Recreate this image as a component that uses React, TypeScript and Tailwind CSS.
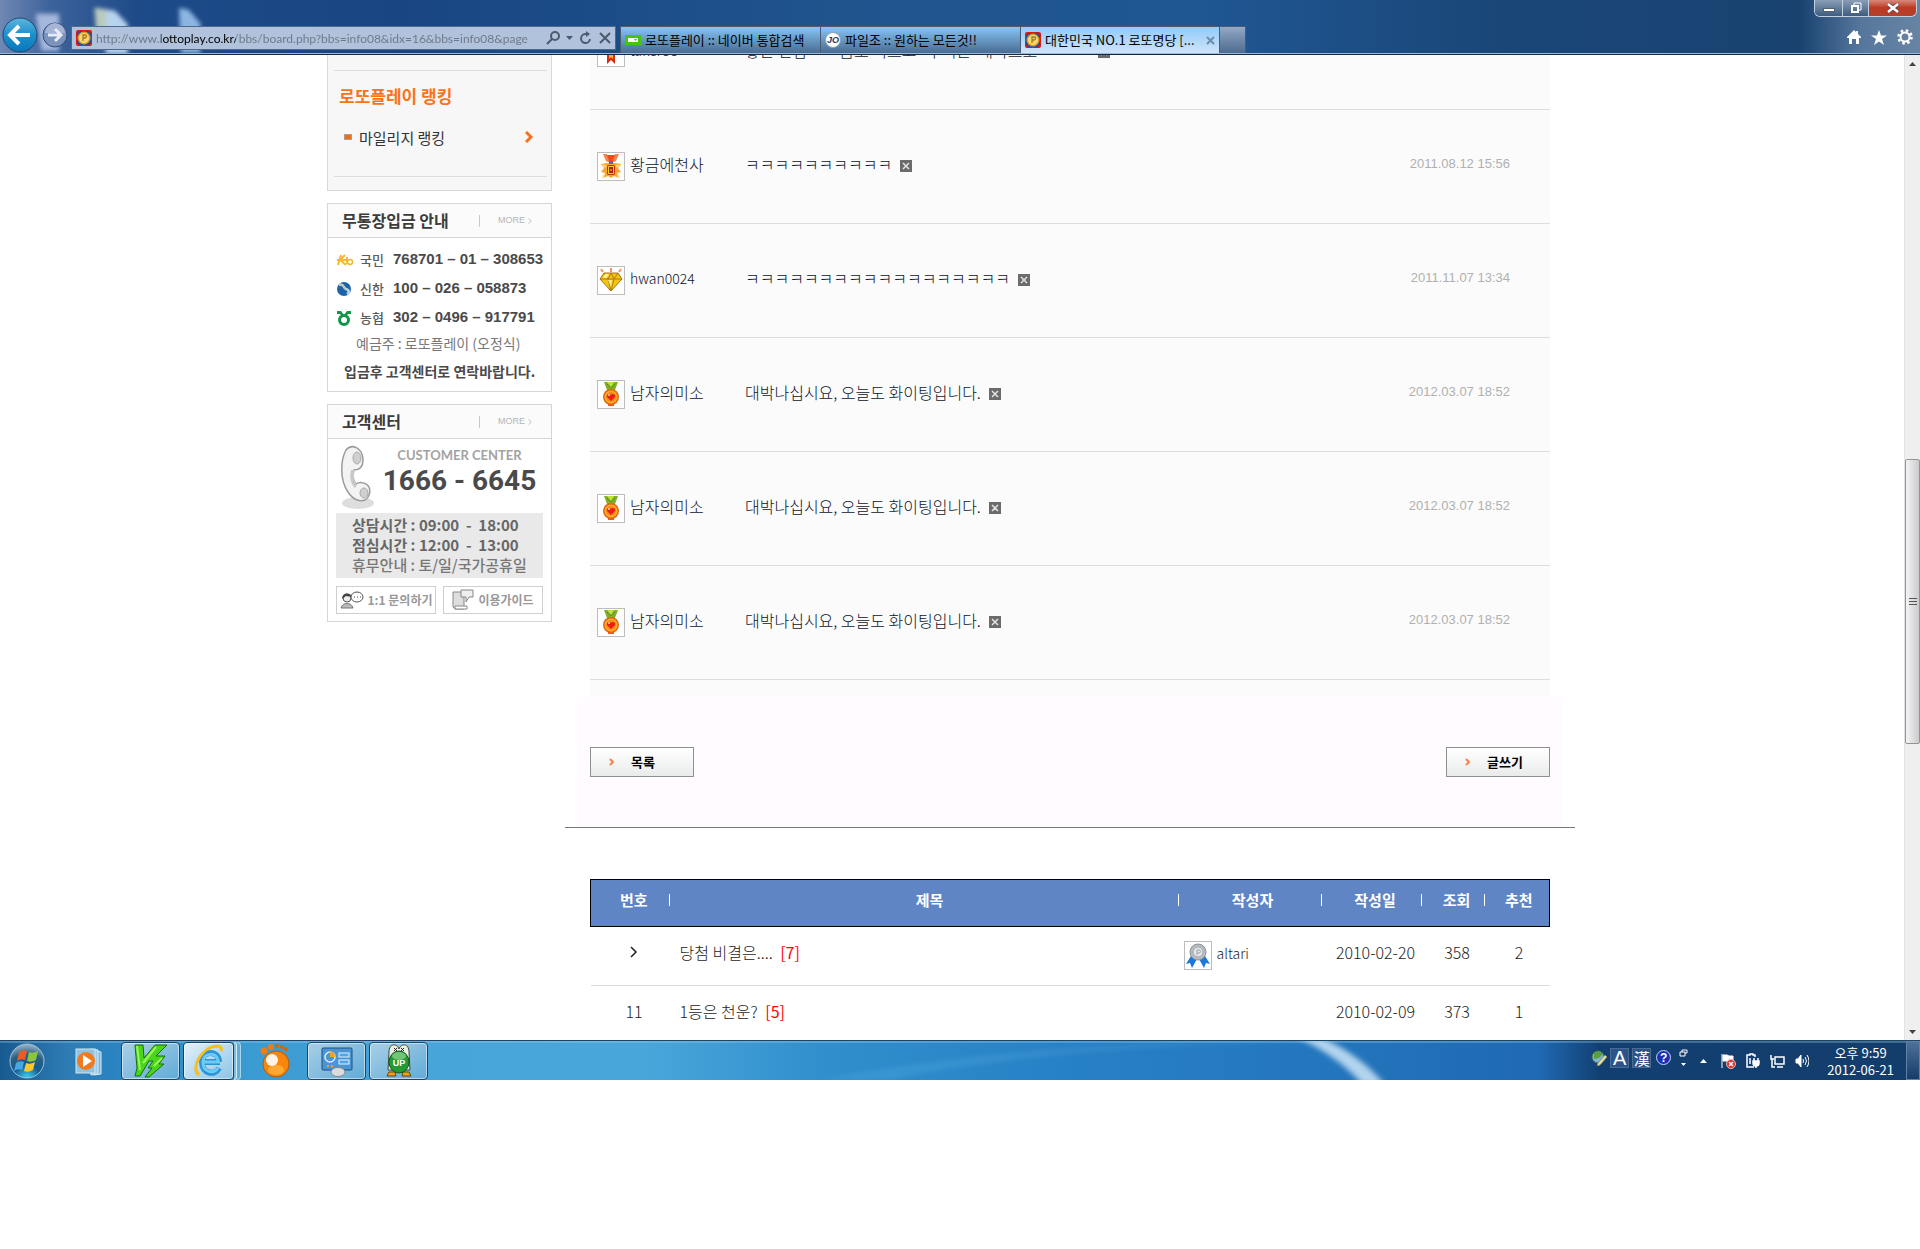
import React from 'react';
import { ChevronRight } from 'lucide-react';

type Rank = 'ribbon' | 'star' | 'diamond' | 'heart' | 'silver';

const comments: { rank: Rank; name: string; text: string; date: string }[] = [
  { rank: 'ribbon', name: 'takeroo', text: '좋은 만남         꿈도 이르고   구리은  대박으로               ', date: '2011.07.29 11:20' },
  { rank: 'star', name: '황금에천사', text: 'ㅋㅋㅋㅋㅋㅋㅋㅋㅋㅋ', date: '2011.08.12 15:56' },
  { rank: 'diamond', name: 'hwan0024', text: 'ㅋㅋㅋㅋㅋㅋㅋㅋㅋㅋㅋㅋㅋㅋㅋㅋㅋㅋ', date: '2011.11.07 13:34' },
  { rank: 'heart', name: '남자의미소', text: '대박나십시요, 오늘도 화이팅입니다.', date: '2012.03.07 18:52' },
  { rank: 'heart', name: '남자의미소', text: '대박나십시요, 오늘도 화이팅입니다.', date: '2012.03.07 18:52' },
  { rank: 'heart', name: '남자의미소', text: '대박나십시요, 오늘도 화이팅입니다.', date: '2012.03.07 18:52' },
];

const posts = [
  { no: '', title: '당첨 비결은....', count: 7, author: 'altari', date: '2010-02-20', views: 358, votes: 2 },
  { no: '11', title: '1등은 천운?', count: 5, author: '', date: '2010-02-09', views: 373, votes: 1 },
];

const columns = [
  { label: '번호', pad: 'pl-2' },
  { label: '제목', pad: 'pl-3' },
  { label: '작성자', pad: 'pl-1.5' },
  { label: '작성일', pad: 'pl-2' },
  { label: '조회', pad: 'pl-2' },
  { label: '추천', pad: 'pl-1' },
];

function RankIcon({ rank }: { rank: Rank }) {
  return (
    <span className="flex h-[29px] w-7 shrink-0 items-center justify-center border border-[#bdbdbd] bg-white">
      <svg viewBox="0 0 24 25" className="h-[25px] w-6" aria-hidden="true">
        {rank === 'ribbon' && (
          <>
            <circle cx="12" cy="8" r="6" fill="#f5a11c" />
            <path d="M8 12h8v12l-4-4-4 4z" fill="#d92810" />
            <path d="M10 13h4v6l-2-2-2 2z" fill="#ffb52b" />
          </>
        )}
        {rank === 'star' && (
          <>
            <path d="M4 0h4l2 5h4l2-5h4l-3 7-4 2h-2L7 7z" fill="#f0854e" />
            <path d="M8 1h8l-2 6h-4z" fill="#f9481b" />
            <path d="M2 10l6-1h8l6 1-3 4 3 4-4 1 2 5-5-2-3 2-3-2-5 2 2-5-4-1 3-4-3-4z" fill="#fba62c" />
            <path d="M5 21l-1 3M19 21l1 3M4 11l3 2M20 11l-3 2" stroke="#ffd98a" strokeWidth="2" />
            <rect x="10" y="7" width="4" height="3" fill="#4d6fa8" />
            <rect x="8" y="11" width="8" height="10" rx="2" fill="#c92a0b" />
            <rect x="9" y="12" width="6" height="8" rx="1" fill="#ffcf2a" />
            <rect x="10" y="13" width="4" height="6" fill="#a61c10" />
            <rect x="11" y="15" width="2" height="2" fill="#f3713c" />
          </>
        )}
        {rank === 'diamond' && (
          <>
            <path d="M5 5h14l4 6-11 12L1 11z" fill="#f2c418" stroke="#a97408" />
            <path d="M2 11h20M5 5l4 6 3-6 3 6 4-6M9 11l3 12 3-12" fill="none" stroke="#b57a08" />
            <path d="M6 6h4l-2 4H4zM9 12h4l-1 7z" fill="#fff08a" />
            <path d="M2 1l2 3M22 1l-2 3M12 0v4" stroke="#f0916c" strokeWidth="2" />
          </>
        )}
        {rank === 'heart' && (
          <>
            <path d="M5 0h14l-3 8H8z" fill="#7fb026" />
            <path d="M8 0h7l-3 5z" fill="#c2e43a" />
            <path d="M8 2l4 4 4-4" fill="none" stroke="#4d8424" strokeDasharray="2 1" />
            <circle cx="12" cy="15" r="8" fill="#e2641a" />
            <circle cx="12" cy="15" r="6.500" fill="#ffb01e" />
            <circle cx="12" cy="15" r="5" fill="#f58a1c" />
            <path d="M12 19l-4-4c-1-3 3-4 4-2 1-2 5-1 4 2z" fill="#ee1c16" />
            <circle cx="10" cy="13" r="1" fill="#ffd2c4" />
            <path d="M9 22h6v2H9z" fill="#f05b1d" />
          </>
        )}
        {rank === 'silver' && (
          <>
            <path d="M5 13L0 21l4-1 2 5 5-9zM19 13l5 8-4-1-2 5-5-9z" fill="#1f78d8" />
            <circle cx="12" cy="9" r="8" fill="#b9bcc0" stroke="#8d9196" />
            <circle cx="12" cy="9" r="5" fill="#e4e6e8" stroke="#a5a8ac" />
            <path d="M11 12V7h2a1 1 0 010 3h-2" fill="none" stroke="#a0a3a8" />
          </>
        )}
      </svg>
    </span>
  );
}

function CoinIcon() {
  return (
    <svg viewBox="0 0 16 16" className="h-4 w-4 shrink-0" aria-hidden="true">
      <rect width="16" height="16" rx="2" fill="#d8181c" />
      <path d="M1 4l3-3h8l3 3v8l-3 3H4l-3-3z" fill="#1b4f94" />
      <circle cx="8" cy="8" r="6.500" fill="#d9a02c" />
      <circle cx="8" cy="8" r="5" fill="#f8da72" />
      <path d="M7 11V5h2a1.500 1.500 0 010 3H7" fill="none" stroke="#a8741a" strokeWidth="1.300" />
    </svg>
  );
}

function BrowserBar() {
  return (
    <header className="relative flex h-[55px] shrink-0 items-end overflow-hidden border-b border-[#14294a] bg-[linear-gradient(90deg,#6f88b4_0,#3d639b_50px,#1d4a88_140px,#194683_400px,#20568f_900px,#1f5794_1200px,#1a4677_1500px,#194270_1800px,#55779c_1860px,#6884a3_100%)]">
      <svg className="absolute inset-0 h-full w-60" viewBox="0 0 240 55" aria-hidden="true">
        <defs>
          <filter id="soft" x="-50%" y="-50%" width="200%" height="200%">
            <feGaussianBlur stdDeviation="2" />
          </filter>
        </defs>
        <g filter="url(#soft)">
          <path d="M34 14h24v38H40z" fill="#a5b7dc" />
          <path d="M95 8l20 3 13 14v30h-22z" fill="#b7d3ee" />
          <path d="M94 8l12 2v36l-9 3z" fill="#b9cbbd" />
          <path d="M180 8l10 2 12 14v30h-20z" fill="#8db5e2" />
        </g>
      </svg>

      <div className="relative flex min-w-0 flex-1 items-end border-b border-[#9db9d8]">
        <div className="flex h-9 shrink-0 items-center gap-1 pl-0.5">
          <button type="button" aria-label="뒤로" className="h-9 w-9">
            <svg viewBox="0 0 36 36" className="h-9 w-9">
              <defs>
                <linearGradient id="back" x1="0" y1="0" x2="0" y2="1">
                  <stop offset="0" stopColor="#5db5de" />
                  <stop offset=".5" stopColor="#1c8fcb" />
                  <stop offset="1" stopColor="#0a76b8" />
                </linearGradient>
              </defs>
              <circle cx="18" cy="18" r="17" fill="url(#back)" stroke="#26456f" />
              <path d="M8 18h20M17 9l-9 9 9 9" fill="none" stroke="#fff" strokeWidth="4" />
            </svg>
          </button>
          <button type="button" aria-label="앞으로" className="h-[26px] w-[26px]">
            <svg viewBox="0 0 26 26" className="h-[26px] w-[26px]">
              <circle cx="13" cy="13" r="12" fill="#7a93bb" stroke="#2f4a76" />
              <path d="M3 11a10 10 0 0120 0z" fill="#a4b4d2" />
              <path d="M6 13h13M13 7l6 6-6 6" fill="none" stroke="#e6ecf5" strokeWidth="3" />
            </svg>
          </button>
        </div>

        <div className="mb-[3px] ml-[3px] flex h-6 w-[545px] shrink-0 items-center gap-1 border border-[#50688a] bg-[#b0c2dc] px-1 text-[#4c5a6d]">
          <CoinIcon />
          <input
            aria-label="주소"
            defaultValue="http://www.lottoplay.co.kr/bbs/board.php?bbs=info08&idx=16&bbs=info08&page"
            className="h-5 min-w-0 flex-1 bg-[linear-gradient(90deg,#6c7888_65px,#000_65px,#000_140px,#6c7888_140px)] bg-clip-text font-['Lato',sans-serif] text-xs text-transparent outline-none"
          />
          <div className="flex items-center gap-1.5">
            <button type="button" aria-label="검색">
              <svg viewBox="0 0 14 14" className="h-3.5 w-3.5" fill="none" stroke="currentColor" strokeWidth="2">
                <circle cx="9" cy="5" r="4" />
                <path d="M6 8l-5 5" />
              </svg>
            </button>
            <button type="button" aria-label="주소 목록">
              <svg viewBox="0 0 7 4" className="h-1 w-[7px]" fill="currentColor">
                <path d="M0 0h7L3.500 4z" />
              </svg>
            </button>
            <button type="button" aria-label="새로 고침">
              <svg viewBox="0 0 14 14" className="h-3.5 w-3.5" fill="none" stroke="currentColor" strokeWidth="2">
                <path d="M11 8a4.500 4.500 0 11-4-5h3" />
                <path d="M7 0l4 3-4 3z" fill="currentColor" stroke="none" />
              </svg>
            </button>
            <button type="button" aria-label="중지">
              <svg viewBox="0 0 12 12" className="h-3 w-3" stroke="currentColor" strokeWidth="2">
                <path d="M1 1l10 10M11 1L1 11" />
              </svg>
            </button>
          </div>
        </div>

        <nav className="ml-1 flex h-[27px] text-[13px] leading-5 text-black">
          <a href="#naver" className="flex w-[200px] items-center gap-1 border-l border-t border-[#4c5b70] bg-linear-to-b from-[#86c6f8] to-[#4a6c92] pl-1">
            <svg viewBox="0 0 16 10" className="h-2.5 w-4 shrink-0">
              <rect width="16" height="10" fill="#49c30d" />
              <rect x="3" y="3" width="10" height="4" fill="#fff" />
              <path d="M9 4h3l-1.500 2z" fill="#49c30d" />
            </svg>
            <span className="whitespace-nowrap">로또플레이 :: 네이버 통합검색</span>
          </a>
          <a href="#filejo" className="flex w-[200px] items-center gap-1 border-l border-t border-[#4c5b70] bg-linear-to-b from-[#86c6f8] to-[#4a6c92] pl-1">
            <span className="flex h-4 w-4 shrink-0 items-center justify-center rounded-full border border-[#8fa0b4] bg-white font-['Liberation_Sans',sans-serif] text-[9px] font-bold italic text-[#1f3763]">
              JO
            </span>
            <span className="whitespace-nowrap">파일조 :: 원하는 모든것!!</span>
          </a>
          <div className="flex w-[199px] items-center border-l border-t border-[#4c5b70] bg-linear-to-b from-[#8fcbfa] to-[#cfe3f7] px-1">
            <a href="#lotto" className="flex flex-1 items-center gap-1">
              <CoinIcon />
              <span className="whitespace-nowrap">대한민국 NO.1 로또명당 [...</span>
            </a>
            <button type="button" aria-label="탭 닫기">
              <svg viewBox="0 0 9 9" className="h-[9px] w-[9px]" stroke="#6f8cae" strokeWidth="2">
                <path d="M1 1l7 7M8 1L1 8" />
              </svg>
            </button>
          </div>
          <button type="button" aria-label="새 탭" className="w-[27px] border-x border-t border-[#4c5b70] bg-linear-to-b from-[#93a9c6] to-[#4e6b90]" />
        </nav>

        <div className="ml-auto flex h-[54px] flex-col items-end justify-between pb-2 pr-[3px]">
          <div className="flex h-[18px] overflow-hidden rounded-b-md border border-t-0 border-[#c3d0de]">
            <button type="button" aria-label="최소화" className="flex w-7 items-center justify-center border-r border-[#c3d0de] bg-linear-to-b from-[#8fa3ba] to-[#3f5c80] pt-1">
              <span className="h-1 w-3 border border-[#51616f] bg-white" />
            </button>
            <button type="button" aria-label="이전 크기로" className="flex w-[26px] items-center justify-center border-r border-[#c3d0de] bg-linear-to-b from-[#8fa3ba] to-[#3f5c80]">
              <svg viewBox="0 0 12 12" className="h-3 w-3" fill="none" stroke="#fff" strokeWidth="2">
                <path d="M4 3V1h7v7H9" strokeWidth="1" />
                <rect x="2" y="4" width="6" height="6" />
              </svg>
            </button>
            <button type="button" aria-label="닫기" className="flex w-[47px] items-center justify-center bg-linear-to-b from-[#d99286] via-[#bd3a23] to-[#b5402c]">
              <svg viewBox="0 0 12 10" className="h-2.5 w-3">
                <path d="M1 1l10 8M11 1L1 9" stroke="#5a4a52" strokeWidth="4" />
                <path d="M1 1l10 8M11 1L1 9" stroke="#fff" strokeWidth="2.500" />
              </svg>
            </button>
          </div>
          <div className="flex gap-2.5 pr-1 text-white">
            <button type="button" aria-label="홈">
              <svg viewBox="0 0 14 14" className="h-3.5 w-3.5" fill="currentColor">
                <path d="M7 0l2 2V1h2v3l3 3v1h-2v6H9V9H5v5H2V8H0V7z" />
              </svg>
            </button>
            <button type="button" aria-label="즐겨찾기">
              <svg viewBox="0 0 16 15" className="h-[15px] w-4" fill="currentColor">
                <path d="M8 0l2 5.500h6l-5 3.500 2 6-5-3.500L3 15l2-6-5-3.500h6z" />
              </svg>
            </button>
            <button type="button" aria-label="도구">
              <svg viewBox="0 0 16 16" className="h-4 w-4" fill="none" stroke="currentColor">
                <circle cx="8" cy="8" r="4.500" strokeWidth="2" />
                <circle cx="8" cy="8" r="6.500" strokeWidth="2.500" strokeDasharray="2.500 2.600" />
              </svg>
            </button>
          </div>
        </div>
      </div>
    </header>
  );
}

function SideHead({ title }: { title: string }) {
  return (
    <div className="flex h-[34px] items-center border-b border-[#d6d6d6] bg-[#fbfbfb] pl-3.5 pr-4">
      <h2 className="flex-1 pb-0.5 text-base font-bold text-[#3c3c3c]">{title}</h2>
      <span className="mr-[18px] h-3 w-px bg-[#c9c9c9]" />
      <a href="#more" className="flex items-center font-['Liberation_Sans',sans-serif] text-[9px] text-[#b5b5b5]">
        MORE
        <ChevronRight className="h-2.5 w-2.5" />
      </a>
    </div>
  );
}

function BankRow({ bank, account, children }: { bank: string; account: string; children: React.ReactNode }) {
  return (
    <li className="flex h-[29px] items-center whitespace-nowrap">
      <svg viewBox="0 0 18 16" className="mr-1.5 h-4 w-[18px] shrink-0" aria-hidden="true">
        {children}
      </svg>
      <span className="w-[33px] text-[13px] font-medium text-[#5c5c5c]">{bank}</span>
      <span className="font-['Liberation_Sans',sans-serif] text-[15px] font-bold text-[#4a4a4a]">{account}</span>
    </li>
  );
}

function Sidebar() {
  return (
    <aside className="w-[225px] shrink-0">
      <section className="mb-3 border border-t-0 border-[#d9d9d9] bg-[#f7f7f7] pb-[13px] pl-1.5 pr-1 pt-[15px]">
        <div className="border-y border-[#dedede] pb-[26px] pl-[5px] pr-3.5 pt-[13px]">
          <h2 className="mb-[18px] text-[17px] font-bold leading-6 text-[#fb7318]">로또플레이 랭킹</h2>
          <a href="#mileage" className="flex h-6 items-center text-[15px] text-[#333]">
            <span className="mb-0.5 ml-[5px] mr-[7px] h-1.5 w-2 border border-[#b79a86] bg-[#e8701c]" />
            <span className="flex-1">마일리지 랭킹</span>
            <svg viewBox="0 0 8 12" className="mb-0.5 h-3 w-2" fill="none" stroke="#fb6f1a" strokeWidth="3">
              <path d="M1 1l5 5-5 5" />
            </svg>
          </a>
        </div>
      </section>

      <section className="mb-3 h-[189px] border border-[#d6d6d6] bg-white">
        <SideHead title="무통장입금 안내" />
        <ul className="pl-2 pt-[7px]">
          <BankRow bank="국민" account="768701 – 01 – 308653">
            <path d="M1 8h9M5 3l-3 10M9 3L4 8l6 5" fill="none" stroke="#f7b733" strokeWidth="2" />
            <path d="M11 5v7" stroke="#f7b733" strokeWidth="2" />
            <circle cx="14" cy="10" r="2.500" fill="none" stroke="#f7b733" strokeWidth="1.500" />
          </BankRow>
          <BankRow bank="신한" account="100 – 026 – 058873">
            <circle cx="8" cy="8" r="7" fill="#1d63a8" />
            <path d="M3 4c5-2 4 3 7 4s4 3 1 5" fill="none" stroke="#b9d8ee" strokeWidth="2.500" />
            <path d="M4 4c5 0 3 3 6 5" fill="none" stroke="#d3b666" />
          </BankRow>
          <BankRow bank="농협" account="302 – 0496 – 917791">
            <circle cx="8" cy="10" r="4.500" fill="none" stroke="#119548" strokeWidth="3" />
            <path d="M1 1h4l3 4 3-4h4v3h-3L9 7H7L4 4H1z" fill="#119548" />
          </BankRow>
        </ul>
        <p className="whitespace-nowrap pl-7 text-sm leading-[22px] text-[#777]">예금주 : 로또플레이 (오정식)</p>
        <p className="mt-1.5 whitespace-nowrap pl-4 text-sm font-bold leading-[22px] text-[#4a4a4a]">입금후 고객센터로 연락바랍니다.</p>
      </section>

      <section className="border border-[#d6d6d6] bg-white pb-[7px]">
        <SideHead title="고객센터" />
        <div className="flex h-[74px] pl-3 pt-1.5">
          <svg viewBox="0 0 36 66" className="h-[66px] w-9 shrink-0" aria-hidden="true">
            <ellipse cx="18" cy="58" rx="16" ry="6" fill="#dedede" />
            <path d="M6 5C1 14-1 34 8 47c5 8 12 10 17 8 4-2 6-8 4-13-2-4-9-6-13-3-3-4-4-9-2-14 6 0 9-4 9-10C23 3 12-2 6 5z" fill="#f3f3f3" stroke="#9b9b9b" strokeWidth="1.500" />
            <path d="M11 25c-2 8 0 14 4 18l2-3c-3-4-4-9-2-15z" fill="#c9c9c9" />
            <ellipse cx="17" cy="13" rx="4" ry="6" fill="#cfcfcf" stroke="#aaa" />
            <ellipse cx="24" cy="48" rx="4" ry="5" fill="#cfcfcf" stroke="#aaa" />
          </svg>
          <div className="flex flex-1 flex-col items-center whitespace-nowrap pr-2 pt-0.5">
            <span className="font-['Lato',sans-serif] text-[13px] font-bold leading-4 text-[#a3a3a3]">CUSTOMER CENTER</span>
            <strong className="font-['Roboto',sans-serif] text-[28px] leading-9 text-[#4a4a4a]">1666 - 6645</strong>
          </div>
        </div>
        <div className="mx-2 flex h-[65px] flex-col justify-center whitespace-pre bg-[#e9e9e9] pb-0.5 pl-4 text-[15px] font-bold leading-5 text-[#666]">
          <p>상담시간 : 09:00  -  18:00</p>
          <p>점심시간 : 12:00  -  13:00</p>
          <p className="font-medium text-[#777]">휴무안내 : 토/일/국가공휴일</p>
        </div>
        <div className="mx-2 mt-2 flex gap-[7px] text-xs font-bold text-[#999]">
          <button type="button" className="flex h-7 flex-1 items-center justify-center gap-1 whitespace-nowrap border border-[#cfcfcf] bg-white">
            <svg viewBox="0 0 24 20" className="h-5 w-6 shrink-0" aria-hidden="true">
              <circle cx="7" cy="8" r="4" fill="#eee" stroke="#555" />
              <path d="M2 9c0-7 9-7 10-2L6 6z" fill="#444" />
              <path d="M1 18c1-6 11-6 12 0z" fill="#bbb" stroke="#777" />
              <ellipse cx="17" cy="7" rx="6" ry="5" fill="#fff" stroke="#555" />
              <path d="M14 7h1M17 7h1M20 7h1" stroke="#555" />
            </svg>
            1:1 문의하기
          </button>
          <button type="button" className="flex h-7 flex-1 items-center justify-center gap-1 whitespace-nowrap border border-[#cfcfcf] bg-white">
            <svg viewBox="0 0 22 22" className="h-[22px] w-[22px] shrink-0" aria-hidden="true">
              <path d="M1 3h11v17H3l-2-2z" fill="#ddd" stroke="#888" />
              <path d="M3 17h12v3H3z" fill="#fff" stroke="#888" />
              <path d="M9 1h12v7h-4l-3 5V8H9z" fill="#eee" stroke="#888" />
            </svg>
            이용가이드
          </button>
        </div>
      </section>
    </aside>
  );
}

function ActionButton({ label }: { label: string }) {
  return (
    <button type="button" className="flex h-[30px] w-[104px] items-center border border-[#8d9090] bg-linear-to-b from-white to-[#e9ebea] pl-[18px] text-[13px] font-bold text-black">
      <svg viewBox="0 0 6 8" className="mr-4 h-2 w-1.5" fill="none" stroke="#f5824b" strokeWidth="2">
        <path d="M1 1l3 3-3 3" />
      </svg>
      {label}
    </button>
  );
}

function Board() {
  return (
    <main className="-mt-[59px] min-w-0 flex-1">
      <div className="mx-[25px] bg-[#fbfbfb] pb-[17px]">
        {comments.map((comment, index) => (
          <article key={index} className="flex h-[114px] items-center border-b border-[#dcdcdc] pl-[7px] pr-10">
            <RankIcon rank={comment.rank} />
            <span className={`w-[120px] pb-1.5 pl-[5px] font-light text-[#0c1428] ${/^[a-z]/.test(comment.name) ? 'text-sm' : 'text-base'}`}>
              {comment.name}
            </span>
            <p className="flex flex-1 items-center whitespace-pre pb-1.5 text-base font-light text-[#0c1428]">
              {comment.text}
              <button type="button" aria-label="댓글 삭제" className="ml-2 mt-1 flex h-3 w-3 items-center justify-center bg-[#6b6b6b]">
                <svg viewBox="0 0 8 8" className="h-2 w-2" stroke="#e4e4e4" strokeWidth="1.500">
                  <path d="M1 1l6 6M7 1L1 7" />
                </svg>
              </button>
            </p>
            <time className="pb-1.5 font-['Liberation_Sans',sans-serif] text-[13px] text-[#b0b0b0]">{comment.date}</time>
          </article>
        ))}
      </div>

      <div className="mx-3 flex justify-between bg-[#fffbff] px-[13px] py-[50px]">
        <ActionButton label="목록" />
        <ActionButton label="글쓰기" />
      </div>
      <hr className="border-[#777]" />

      <div className="mx-[25px] mt-[51px]">
        <table className="w-full table-fixed border-collapse text-base text-[#1c1c1c]">
          <colgroup>
            <col className="w-[79px]" />
            <col />
            <col className="w-[143px]" />
            <col className="w-[100px]" />
            <col className="w-[63px]" />
            <col className="w-[65px]" />
          </colgroup>
          <thead>
            <tr className="h-[47px] border border-black bg-[#5f85c4] text-white">
              {columns.map(({ label, pad }, index) => (
                <th key={label} className="p-0 pb-1.5 text-[15px] font-bold">
                  <span className="flex items-center">
                    <span className={`flex-1 ${pad}`}>{label}</span>
                    {index < columns.length - 1 && <span className="h-3 w-px bg-white" />}
                  </span>
                </th>
              ))}
            </tr>
          </thead>
          <tbody>
            {posts.map((post) => (
              <tr key={post.title} className="h-[59px] border-b border-[#dcdcdc] text-center font-light">
                <td className="p-0 pb-2 pl-2">
                  {post.no || (
                    <svg viewBox="0 0 8 12" className="mx-auto h-3 w-2" fill="none" stroke="#222" strokeWidth="1.500">
                      <path d="M1 1l5 5-5 5" />
                    </svg>
                  )}
                </td>
                <td className="p-0 pb-2 pl-2.5 text-left">
                  <a href="#post">
                    {post.title} <span className="ml-1 font-normal text-[#f00]">[{post.count}]</span>
                  </a>
                </td>
                <td className="p-0 pb-0.5 pl-[5px]">
                  {post.author && (
                    <span className="flex items-center gap-[5px]">
                      <RankIcon rank="silver" />
                      <span className="pb-1 text-sm">{post.author}</span>
                    </span>
                  )}
                </td>
                <td className="whitespace-nowrap p-0 pb-2 pl-2">{post.date}</td>
                <td className="p-0 pb-2 pl-2">{post.views}</td>
                <td className="p-0 pb-2 pl-1">{post.votes}</td>
              </tr>
            ))}
          </tbody>
        </table>
      </div>
    </main>
  );
}

function ScrollBar() {
  return (
    <div className="flex w-4 shrink-0 flex-col border-l border-[#e2e2e2] bg-[#efefef]">
      <button type="button" aria-label="위로" className="flex h-[17px] items-center justify-center">
        <svg viewBox="0 0 7 4" className="h-1 w-[7px]" fill="#444">
          <path d="M0 4h7L3.500 0z" />
        </svg>
      </button>
      <div className="grow-[388] basis-0" />
      <div className="flex grow-[283] basis-0 flex-col items-center justify-center gap-0.5 rounded-xs border border-[#949494] bg-linear-to-r from-[#f5f5f5] to-[#cbcbcf]">
        <span className="h-px w-2 bg-[#555]" />
        <span className="h-px w-2 bg-[#555]" />
        <span className="h-px w-2 bg-[#555]" />
      </div>
      <div className="grow-[280] basis-0" />
      <button type="button" aria-label="아래로" className="flex h-[17px] items-center justify-center">
        <svg viewBox="0 0 7 4" className="h-1 w-[7px]" fill="#444">
          <path d="M0 0h7L3.500 4z" />
        </svg>
      </button>
    </div>
  );
}

function TaskButton({ label, active, children }: { label: string; active?: boolean; children: React.ReactNode }) {
  return (
    <button
      type="button"
      aria-label={label}
      className={`flex h-[38px] items-center justify-center rounded-sm border ring-1 ring-inset ring-white/50 ${
        active
          ? 'w-[51px] border-[#1c3f60] bg-linear-to-br from-[#e3f1fa] to-[#8cc4e6]'
          : 'w-[59px] border-[#1c4468] bg-linear-to-br from-[#a8cfe6] to-[#5fabd8]'
      }`}
    >
      {children}
    </button>
  );
}

function TaskBar() {
  return (
    <footer className="relative flex h-10 shrink-0 items-center overflow-hidden border-t border-[#1f4565] bg-[linear-gradient(90deg,#175a90_0,#2f7db5_70px,#2a83c0_110px,#3a9bd2_250px,#48a5d9_430px,#4aa6da_640px,#318fcd_820px,#2780c5_1080px,#2477be_1300px,#1f69b2_1540px,#123f72_1600px,#133d6b_100%)]">
      <svg viewBox="0 0 1920 40" preserveAspectRatio="none" className="absolute inset-0 h-full w-full" aria-hidden="true">
        <defs>
          <filter id="glow" x="-20%" y="-20%" width="140%" height="140%">
            <feGaussianBlur stdDeviation="3" />
          </filter>
        </defs>
        <path d="M1296-4h24q40 18 64 48h-22q-26-30-66-48z" fill="#d6ecfb" opacity=".8" filter="url(#glow)" />
        <path d="M820 40q200-40 480-40h30q-290 5-440 40z" fill="#5fb0e4" opacity=".25" filter="url(#glow)" />
        <path d="M0 1h1920" stroke="#9ccbe8" opacity=".7" />
      </svg>

      <div className="relative flex h-full items-center">
        <button type="button" aria-label="시작" className="ml-[9px] h-9 w-9">
          <svg viewBox="0 0 36 36" className="h-9 w-9">
            <defs>
              <radialGradient id="orb" cx=".5" cy="1" r="1">
                <stop offset="0" stopColor="#3fd6f7" />
                <stop offset=".4" stopColor="#125b8e" />
                <stop offset=".7" stopColor="#2a5f86" />
                <stop offset="1" stopColor="#9db9ca" />
              </radialGradient>
            </defs>
            <circle cx="18" cy="18" r="17" fill="url(#orb)" stroke="#9dc2da" />
            <path d="M10 9q4-3 8-1l-2 9q-4-2-8 1z" fill="#ee5a24" />
            <path d="M20 9q4 2 9-1l-2 9q-5 3-9 1z" fill="#8cc63f" />
            <path d="M7 20q4-3 8-1l-2 8q-4-2-8 1z" fill="#4aa4e8" />
            <path d="M17 20q4 2 9-1l-2 8q-5 3-9 1z" fill="#fbc92c" />
          </svg>
        </button>
        <button type="button" aria-label="미디어 플레이어" className="ml-[30px] h-8 w-[30px]">
          <svg viewBox="0 0 30 32" className="h-8 w-[30px]">
            <path d="M19 5l7 2v22l-7 1z" fill="#7fb7dc" stroke="#d6ebf7" />
            <path d="M16 4l7 1v24l-7 1z" fill="#9ccbe8" stroke="#d6ebf7" />
            <rect x="1" y="4" width="19" height="24" fill="#8fc3e4" stroke="#cfe6f4" />
            <circle cx="11" cy="16" r="9" fill="#f07b1e" />
            <path d="M8 10l9 6-9 6z" fill="#fff" />
          </svg>
        </button>
        <div className="ml-4 flex items-center gap-[3px]">
          <TaskButton label="V3">
            <svg viewBox="0 0 34 36" className="h-9 w-[34px]">
              <path d="M1 2h8l1 13L21 2h12L22 13h9l-6 8h5L15 34h-4l7-9h-4l5-7h-4L6 33H1l2-8z" fill="#48d51a" stroke="#176d0c" />
              <path d="M3 3l3 24M22 4L9 20M28 15l-8 8" stroke="#9cf35e" strokeWidth="2" />
            </svg>
          </TaskButton>
          <div className="flex">
            <TaskButton label="인터넷 익스플로러" active>
              <svg viewBox="0 0 32 36" className="h-9 w-8">
                <path d="M27 19H9M26 25c-4 8-17 6-17-6C9 7 26 7 26 19" fill="none" stroke="#2d95d6" strokeWidth="6" />
                <path d="M27 19H9M25 25c-4 6-15 5-15-6C10 9 25 9 25 18" fill="none" stroke="#6ecbf5" strokeWidth="3" />
                <path d="M6 32C-3 26 8 4 24 3c4 0 5 2 4 5" fill="none" stroke="#f8bd20" strokeWidth="3" />
              </svg>
            </TaskButton>
            <span className="w-[3px] rounded-r-sm border-y border-r border-[#d8edf8] bg-[#7dbde3]" />
            <span className="w-1 rounded-r-sm border-y border-r border-[#a8d4ec] bg-[#5fadd9]" />
          </div>
          <button type="button" aria-label="곰플레이어" className="mx-3.5 h-9 w-8">
            <svg viewBox="0 0 32 36" className="h-9 w-8">
              <circle cx="18" cy="21" r="13" fill="#f8860c" stroke="#b85a08" />
              <ellipse cx="18" cy="27" rx="8" ry="5" fill="#ffc04c" opacity=".6" />
              <circle cx="14" cy="17" r="6" fill="#fff" opacity=".9" />
              <circle cx="6" cy="8" r="3.500" fill="#f07c14" />
              <circle cx="13" cy="4" r="3" fill="#f07c14" />
              <circle cx="19" cy="3" r="2" fill="#d8620c" />
              <circle cx="24" cy="4" r="2" fill="#d8620c" />
              <circle cx="28" cy="6" r="2" fill="#d8620c" />
            </svg>
          </button>
          <TaskButton label="제어판">
            <svg viewBox="0 0 32 32" className="h-8 w-8">
              <rect x="1" y="3" width="30" height="22" rx="1" fill="#4a95d2" stroke="#1b4f86" />
              <circle cx="9" cy="12" r="5" fill="none" stroke="#d8ecf8" strokeWidth="1.500" />
              <path d="M9 6a6 6 0 015 6H9z" fill="#f5a02a" />
              <rect x="18" y="8" width="10" height="4" fill="#4ea6e8" stroke="#e3f2fb" />
              <rect x="18" y="15" width="10" height="4" fill="#4ea6e8" stroke="#e3f2fb" />
              <path d="M6 21h2M10 21h2" stroke="#f5a02a" strokeWidth="2" />
              <ellipse cx="17" cy="27" rx="7" ry="4.500" fill="#d9dcde" stroke="#888" />
            </svg>
          </TaskButton>
          <TaskButton label="업로더">
            <svg viewBox="0 0 28 36" className="h-9 w-7">
              <path d="M4 29l-2 4h9l-1-4zM24 29l2 4h-9l1-4z" fill="#f0a020" stroke="#6a4208" />
              <path d="M4 9c0-9 8-9 10-3 2-6 10-6 10 3l1 18H3z" fill="#e9efe6" stroke="#3a4a36" />
              <path d="M9 5l3 3M12 5L9 8M16 5l3 3M19 5l-3 3" stroke="#222" />
              <ellipse cx="14" cy="19" rx="10" ry="11" fill="#249a33" stroke="#135a1c" />
              <ellipse cx="14" cy="13" rx="7" ry="4" fill="#8fd893" opacity=".7" />
              <text x="14" y="23" textAnchor="middle" fontSize="9" fontWeight="bold" fontFamily="Liberation Sans, sans-serif" fill="#fff">UP</text>
            </svg>
          </TaskButton>
        </div>
      </div>

      <div className="relative ml-auto flex h-full items-center text-white">
        <div className="mb-1.5 flex items-center gap-[3px]">
          <svg viewBox="0 0 16 16" className="h-4 w-4">
            <circle cx="7" cy="7" r="6" fill="#7fb3d8" stroke="#3f6d43" />
            <path d="M3 3l5-2 4 3-4 4-5 1z" fill="#5aa03c" />
            <path d="M14 5l2 2-7 8-3 1 1-3z" fill="#e8e2b0" stroke="#8a8a54" />
          </svg>
          <button type="button" className="flex h-5 w-[19px] items-center justify-center border border-[#4a6c92] bg-[#2c5488] font-['Liberation_Sans',sans-serif] text-xl leading-none">
            A
          </button>
          <button type="button" className="flex h-5 w-[19px] items-center justify-center border border-[#4a6c92] bg-[#2c5488] text-base leading-none">
            漢
          </button>
          <button type="button" className="ml-0.5 flex h-[15px] w-[15px] items-center justify-center rounded-full border border-[#cbd6f5] bg-[#1c2fb4] font-['Liberation_Sans',sans-serif] text-xs font-bold leading-none">
            ?
          </button>
        </div>
        <svg viewBox="0 0 9 18" className="mb-1.5 ml-2 h-[18px] w-[9px]" fill="none" stroke="#fff">
          <path d="M3 3V1h5v3H6M1 3h5v4H1z" />
          <path d="M2 14h5l-2.500 3z" fill="#fff" stroke="none" />
        </svg>
        <svg viewBox="0 0 7 4" className="ml-3 h-1 w-[7px]" fill="#fff">
          <path d="M0 4h7L3.500 0z" />
        </svg>
        <div className="ml-3.5 flex items-center gap-2.5">
          <svg viewBox="0 0 15 16" className="h-4 w-[15px]">
            <path d="M1 1v14M2 2h4l2 1h4v6H8L6 8H2z" fill="#fff" stroke="#fff" />
            <circle cx="10" cy="11" r="4.500" fill="#dc2f2a" stroke="#f6b9b4" />
            <path d="M8 9l4 4M12 9l-4 4" stroke="#fff" strokeWidth="1.500" />
          </svg>
          <svg viewBox="0 0 14 16" className="h-4 w-3.5" fill="none" stroke="#fff" strokeWidth="1.500">
            <path d="M9 4V2H7V1H4v1H1v12h7" />
            <path d="M4 5v6M7 8h6v2a3 3 0 01-6 0zM8 5v3M12 5v3" fill="#fff" />
            <path d="M10 12v3" />
          </svg>
          <svg viewBox="0 0 15 14" className="h-3.5 w-[15px]" fill="none" stroke="#fff" strokeWidth="1.500">
            <path d="M5 3h9v7H5zM7 13h6M1 1v4h3M2 5v8h3" />
          </svg>
          <svg viewBox="0 0 14 14" className="h-3.5 w-3.5" fill="none" stroke="#fff">
            <path d="M1 5h2l3-4v12L3 9H1z" fill="#fff" />
            <path d="M8 5q1 2 0 4M10 3q3 4 0 8M12 1q4 6 0 12" />
          </svg>
        </div>
        <div className="ml-[18px] text-center text-[13px] leading-[17px]">
          <p>오후 9:59</p>
          <p>2012-06-21</p>
        </div>
        <button type="button" aria-label="바탕 화면 보기" className="ml-3 h-full w-3.5 border border-[#5f83a8] bg-linear-to-b from-[#4d7199] to-[#163c68]" />
      </div>
    </footer>
  );
}

export default function App() {
  return (
    <div className="min-h-screen bg-white font-['Noto_Sans_CJK_KR',sans-serif]">
      <div className="flex aspect-video w-full flex-col overflow-hidden">
        <BrowserBar />
        <div className="flex min-h-0 flex-1 overflow-hidden">
          <div className="min-w-0 flex-1 overflow-hidden pr-0.5">
            <div className="mx-auto flex max-w-[1248px] gap-[13px]">
              <Sidebar />
              <Board />
            </div>
          </div>
          <ScrollBar />
        </div>
        <TaskBar />
      </div>
    </div>
  );
}
